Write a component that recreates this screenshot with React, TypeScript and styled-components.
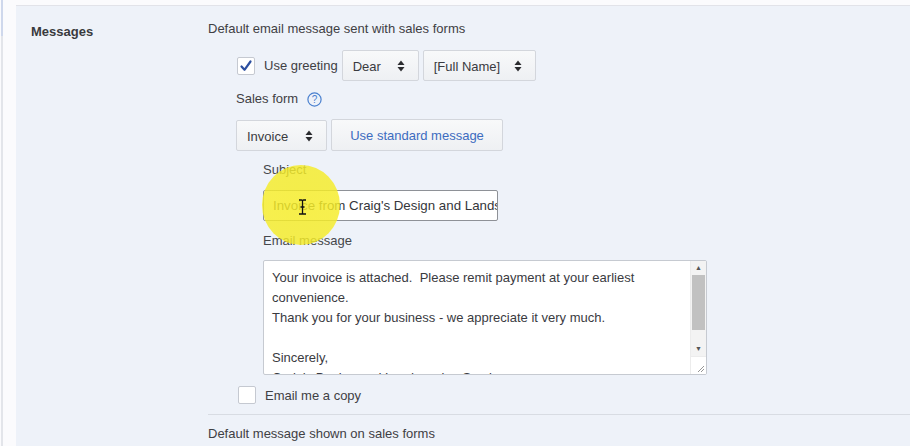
import styled, { createGlobalStyle } from 'styled-components';

const GlobalStyle = createGlobalStyle`
  html, body {
    margin: 0;
    padding: 0;
    background: #fbfbfd;
    font-family: "Liberation Sans", Arial, sans-serif;
    font-size: 13px;
    color: #3d3f43;
  }
`;

const messageLines = [
  'Your invoice is attached.  Please remit payment at your earliest',
  'convenience.',
  'Thank you for your business - we appreciate it very much.',
  '',
  'Sincerely,',
  "Craig's Design and Landscaping Services",
];

function UpDown() {
  return (
    <svg width="8" height="12" viewBox="0 0 8 12">
      <path d="M4 0.5 L7.5 5 L0.5 5 Z" fill="#2b2c2f" />
      <path d="M4 11.5 L7.5 7 L0.5 7 Z" fill="#2b2c2f" />
    </svg>
  );
}

function Check() {
  return (
    <svg width="14" height="14" viewBox="0 0 14 14">
      <path d="M2.5 7.5 L5.5 10.8 L11.5 2.5" fill="none" stroke="#2c4fa0" strokeWidth="2.2" strokeLinecap="round" strokeLinejoin="round" />
    </svg>
  );
}

function HelpIcon() {
  return (
    <svg width="15" height="15" viewBox="0 0 15 15">
      <circle cx="7.5" cy="7.5" r="6.6" fill="none" stroke="#4a80cf" strokeWidth="1.2" />
      <text x="7.5" y="11" textAnchor="middle" fontSize="10" fontFamily="Liberation Sans, Arial, sans-serif" fill="#4a80cf">?</text>
    </svg>
  );
}

function IBeam() {
  return (
    <svg width="9" height="16" viewBox="0 0 9 16">
      <path d="M1 1 H3.5 Q4.5 1 4.5 2 V14 Q4.5 15 3.5 15 H1 M8 1 H5.5 Q4.5 1 4.5 2 M8 15 H5.5 Q4.5 15 4.5 14 M2.5 8 H6.5" fill="none" stroke="#111" strokeWidth="1.3" />
    </svg>
  );
}

export default function App() {
  return (
    <Page>
      <GlobalStyle />
      <Rail />
      <Panel>
        <LabelCol>
          <SectionTitle>Messages</SectionTitle>
        </LabelCol>
        <Content>
          <Heading>Default email message sent with sales forms</Heading>

          <GreetingRow>
            <CheckLabel>
              <Box><Check /></Box>
              Use greeting
            </CheckLabel>
            <Select $width={77}>Dear<UpDown /></Select>
            <Select $width={113}>[Full Name]<UpDown /></Select>
          </GreetingRow>

          <SalesFormLabel>
            Sales form <HelpIcon />
          </SalesFormLabel>

          <FormRow>
            <Select $width={91}>Invoice<UpDown /></Select>
            <PlainButton>Use standard message</PlainButton>
          </FormRow>

          <Fields>
            <FieldLabel>Subject</FieldLabel>
            <SubjectWrap>
              <TextInput>Invoice from Craig's Design and Landscaping Services</TextInput>
              <Highlight />
              <Cursor><IBeam /></Cursor>
            </SubjectWrap>

            <FieldLabel $gap={12}>Email message</FieldLabel>
            <TextArea>
              <TextBody>
                {messageLines.map((l, i) => <Line key={i}>{l || '\u00a0'}</Line>)}
              </TextBody>
              <Scrollbar>
                <Arrow>▲</Arrow>
                <Track><Thumb /></Track>
                <Arrow>▼</Arrow>
                <Grip>
                  <svg width="8" height="8" viewBox="0 0 8 8">
                    <path d="M1 7 L7 1 M4 7 L7 4" stroke="#8a8a8a" strokeWidth="0.9" />
                  </svg>
                </Grip>
              </Scrollbar>
            </TextArea>
          </Fields>

          <CopyRow>
            <Box />
            Email me a copy
          </CopyRow>

          <Divider />
          <Heading>Default message shown on sales forms</Heading>
        </Content>
      </Panel>
    </Page>
  );
}

const Page = styled.div`
  display: flex;
  width: 910px;
  height: 446px;
  overflow: hidden;
  background: #fbfbfd;
`;

const Rail = styled.div`
  width: 2px;
  margin-left: 1px;
  margin-right: 13px;
  background: linear-gradient(#cfd8ec 0, #cfd8ec 36px, #e3e5ea 36px);
`;

const Panel = styled.div`
  flex: 1;
  display: flex;
  margin-top: 5px;
  border-top: 1px solid #e2e3e9;
  background: #eef2f9;
`;

const LabelCol = styled.div`
  width: 192px;
  padding: 18px 0 0 15px;
  box-sizing: border-box;
`;

const SectionTitle = styled.div`
  font-weight: bold;
  font-size: 13px;
  color: #393a3d;
`;

const Content = styled.div`
  flex: 1;
  display: flex;
  flex-direction: column;
  padding-top: 15px;
`;

const Heading = styled.div`
  line-height: 16px;
  color: #3f4044;
`;

const GreetingRow = styled.div`
  display: flex;
  align-items: center;
  gap: 4px;
  margin: 13px 0 0 29px;
`;

const CheckLabel = styled.label`
  display: flex;
  align-items: center;
  gap: 9px;
  color: #3f4044;
`;

const Box = styled.span`
  width: 18px;
  height: 18px;
  box-sizing: border-box;
  border: 1px solid #c5c9d1;
  border-radius: 2px;
  background: #fff;
  display: flex;
  align-items: center;
  justify-content: center;
`;

const Select = styled.div<{ $width: number }>`
  width: ${p => p.$width}px;
  height: 31px;
  box-sizing: border-box;
  display: flex;
  align-items: center;
  justify-content: space-between;
  padding: 1px 13px 0 10px;
  border: 1px solid #d3d6dc;
  border-radius: 2px;
  background: linear-gradient(#f8f9fa, #eef0f3);
  color: #3a3b3f;
`;

const SalesFormLabel = styled.div`
  display: flex;
  align-items: center;
  gap: 9px;
  margin: 10px 0 0 28px;
  line-height: 16px;
  color: #3f4044;
`;

const FormRow = styled.div`
  display: flex;
  gap: 4px;
  margin: 13px 0 0 28px;
`;

const PlainButton = styled.div`
  width: 172px;
  height: 32px;
  margin-top: -1px;
  box-sizing: border-box;
  display: flex;
  align-items: center;
  justify-content: center;
  border: 1px solid #d3d6dc;
  border-radius: 2px;
  background: linear-gradient(#f8f9fa, #eef0f3);
  color: #3d6cc0;
`;

const Fields = styled.div`
  display: flex;
  flex-direction: column;
  margin-left: 55px;
`;

const FieldLabel = styled.div<{ $gap?: number }>`
  margin-top: ${p => p.$gap ?? 11}px;
  line-height: 16px;
  color: #45474b;
`;

const SubjectWrap = styled.div`
  position: relative;
  margin-top: 12px;
  width: 235px;
`;

const TextInput = styled.div`
  height: 31px;
  box-sizing: border-box;
  padding: 0 9px;
  display: flex;
  align-items: center;
  white-space: nowrap;
  overflow: hidden;
  font-size: 13.3px;
  border: 1px solid #8e9197;
  border-radius: 2px;
  background: #fff;
  color: #35363a;
`;

const Highlight = styled.div`
  position: absolute;
  left: -1px;
  top: -25px;
  width: 78px;
  height: 80px;
  border-radius: 50%;
  background: radial-gradient(circle, rgba(245, 236, 40, 0.84) 0, rgba(245, 236, 40, 0.82) 90%, rgba(245, 236, 40, 0.3) 100%);
  pointer-events: none;
`;

const Cursor = styled.div`
  position: absolute;
  left: 35px;
  top: 9px;
  line-height: 0;
`;

const TextArea = styled.div`
  display: flex;
  margin-top: 11px;
  width: 444px;
  height: 115px;
  box-sizing: border-box;
  border: 1px solid #c6cad1;
  border-radius: 2px;
  background: #fff;
  overflow: hidden;
`;

const TextBody = styled.div`
  flex: 1;
  padding: 7px 0 0 8px;
  overflow: hidden;
`;

const Line = styled.div`
  line-height: 20px;
  white-space: pre;
  color: #3a3b3f;
`;

const Scrollbar = styled.div`
  width: 15px;
  display: flex;
  flex-direction: column;
  background: #f3f3f3;
  border-left: 1px solid #ececec;
`;

const Arrow = styled.div`
  height: 14px;
  font-size: 7px;
  line-height: 14px;
  text-align: center;
  color: #555;
`;

const Track = styled.div`
  flex: 1;
  padding: 0 1px;
`;

const Thumb = styled.div`
  height: 55px;
  background: #c1c1c1;
`;

const Grip = styled.div`
  height: 16px;
  display: flex;
  align-items: flex-end;
  justify-content: flex-end;
  padding: 0 1px 1px 0;
  background: #fff;
  border-top: 1px solid #ececec;
`;

const CopyRow = styled.div`
  display: flex;
  align-items: center;
  gap: 9px;
  margin: 11px 0 0 30px;
  color: #3f4044;
`;

const Divider = styled.div`
  height: 1px;
  margin-top: 10px;
  margin-bottom: 11px;
  background: #d8dce3;
`;
